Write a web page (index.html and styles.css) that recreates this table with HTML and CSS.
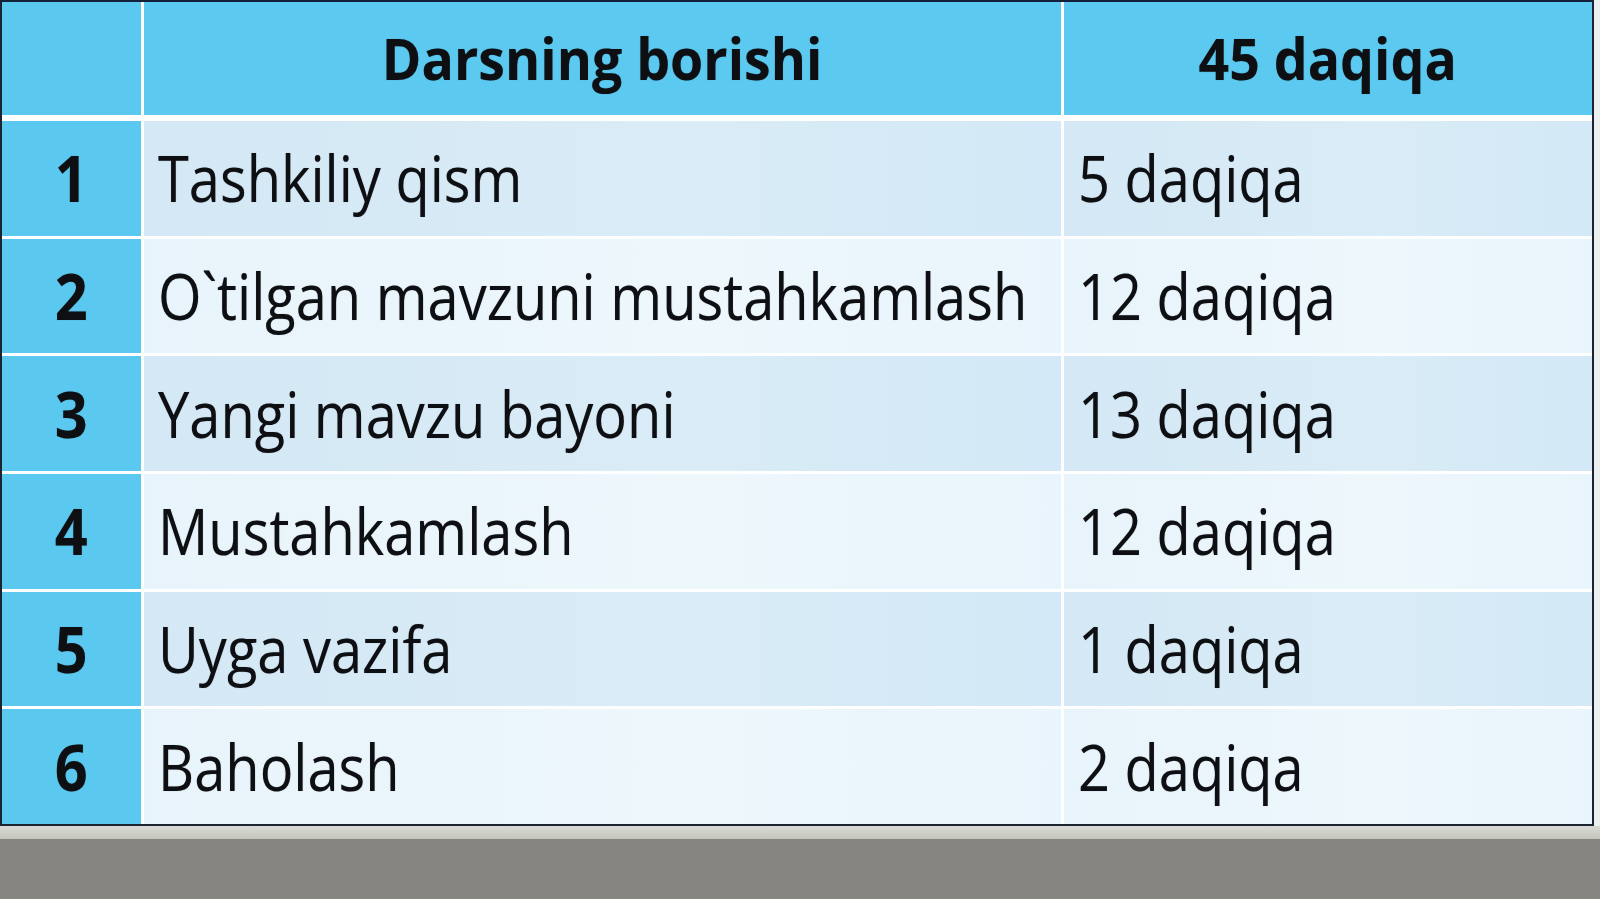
FILE: index.html
```html
<!DOCTYPE html>
<html lang="uz">
<head>
<meta charset="utf-8">
<title>Darsning borishi</title>
<link rel="stylesheet" href="styles.css">
</head>
<body>
<div class="stage">
  <div class="table">
    <div class="cell head num"></div>
    <div class="cell head title"><span class="t">Darsning borishi</span></div>
    <div class="cell head title"><span class="t">45 daqiqa</span></div>

    <div class="cell num"><span class="t">1</span></div>
    <div class="cell text odd"><span class="t">Tashkiliy qism</span></div>
    <div class="cell text odd"><span class="t">5 daqiqa</span></div>

    <div class="cell num"><span class="t">2</span></div>
    <div class="cell text even"><span class="t">O`tilgan mavzuni mustahkamlash</span></div>
    <div class="cell text even"><span class="t">12 daqiqa</span></div>

    <div class="cell num"><span class="t">3</span></div>
    <div class="cell text odd"><span class="t">Yangi mavzu bayoni</span></div>
    <div class="cell text odd"><span class="t">13 daqiqa</span></div>

    <div class="cell num"><span class="t">4</span></div>
    <div class="cell text even"><span class="t">Mustahkamlash</span></div>
    <div class="cell text even"><span class="t">12 daqiqa</span></div>

    <div class="cell num"><span class="t">5</span></div>
    <div class="cell text odd"><span class="t">Uyga vazifa</span></div>
    <div class="cell text odd"><span class="t">1 daqiqa</span></div>

    <div class="cell num"><span class="t">6</span></div>
    <div class="cell text even"><span class="t">Baholash</span></div>
    <div class="cell text even"><span class="t">2 daqiqa</span></div>
  </div>
</div>
<div class="shelf"></div>
</body>
</html>
```
FILE: styles.css
```css
html, body {
  margin: 0;
  padding: 0;
}
body {
  background: #87857f;
  height: 899px;
  overflow: hidden;
  font-family: "Open Sans", "Noto Sans", sans-serif;
  color: #0e0f12;
}
.stage {
  background: #eceff0;
  padding-right: 6px;
}
.table {
  box-sizing: border-box;
  width: 1594px;
  height: 826px;
  border: 2px solid #1c2430;
  border-top-color: #14213a;
  background: #ffffff;
  display: grid;
  grid-template-columns: 139px 917px 1fr;
  grid-template-rows: 116px repeat(6, 1fr);
  column-gap: 3px;
  row-gap: 3px;
}
.cell {
  display: flex;
  align-items: center;
  font-size: 64px;
  line-height: 1;
  white-space: nowrap;
}
.t {
  display: inline-block;
  transform: scaleX(0.875);
  transform-origin: left center;
  text-shadow: 0 0 1px rgba(20, 30, 40, 0.35);
}
.head {
  background: #5ccaf0;
  margin-bottom: 3px;
}
.title {
  justify-content: center;
  font-weight: 700;
  font-size: 58px;
  padding-bottom: 2px;
}
.title .t {
  transform: scaleX(0.925);
  transform-origin: center center;
}
.num .t {
  transform: scaleX(0.9);
  transform-origin: center center;
}
.num {
  background: #5bc9ef;
  justify-content: center;
  font-weight: 700;
}
.text {
  padding-left: 14px;
}
.odd {
  background: linear-gradient(90deg, #d4e8f5 0%, #d9ecf7 60%, #d3e9f7 100%);
}
.even {
  background: linear-gradient(90deg, #e8f4fb 0%, #edf7fc 60%, #e9f5fc 100%);
}
.shelf {
  height: 13px;
  background: linear-gradient(180deg, #dadad5 0%, #c6c6bf 100%);
}
```
